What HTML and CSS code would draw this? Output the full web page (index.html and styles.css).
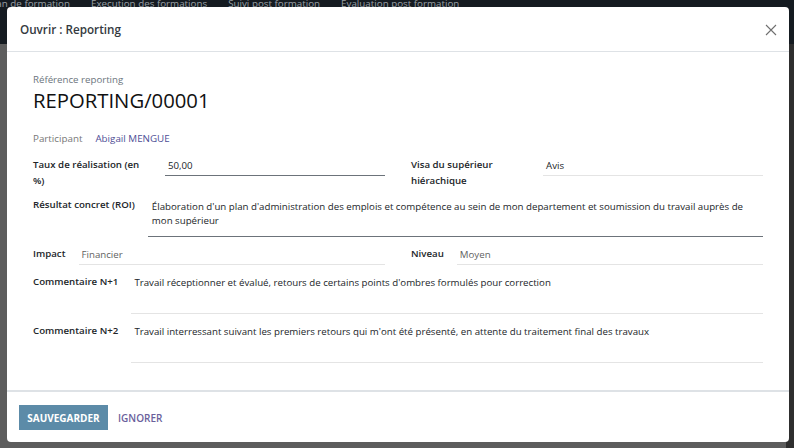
FILE: index.html
```html
<!DOCTYPE html>
<html lang="fr">
  <head>
    <title>Ouvrir : Reporting</title>
    <meta name="viewport" content="width=device-width, initial-scale=1.0">
    <link rel="stylesheet" href="styles.css">
  </head>
  <body>
    <div class="navbar">
      <span class="nav-first">Plan de formation</span>
      <span>Execution des formations</span>
      <span>Suivi post formation</span>
      <span>Evaluation post formation</span>
    </div>
    <div class="page">
      <div class="page-main"></div>
      <div class="page-side"></div>
    </div>

    <div class="modal">
      <div class="modal-header">
        <h4 class="modal-title">Ouvrir : Reporting</h4>
        <svg class="close" width="12" height="12" viewBox="0 0 12 12">
          <path d="M1 1 L11 11 M11 1 L1 11" stroke="#6f6f6f" stroke-width="1.1" fill="none"/>
        </svg>
      </div>

      <div class="modal-body">
        <div class="ref-label">Référence reporting</div>
        <h1 class="ref-name">REPORTING/00001</h1>

        <div class="participant">
          <span class="muted-label">Participant</span>
          <a class="link">Abigail MENGUE</a>
        </div>

        <div class="cols">
          <div class="field-row">
            <label class="lbl lbl-wrap">Taux de réalisation (en %)</label>
            <div class="val val-dark">50,00</div>
          </div>
          <div class="field-row">
            <label class="lbl lbl-wrap">Visa du supérieur hiérachique</label>
            <div class="val">Avis</div>
          </div>
        </div>

        <div class="field-row row-roi">
          <label class="lbl">Résultat concret (ROI)</label>
          <div class="val val-dark val-area-roi">Élaboration d'un plan d'administration des emplois et compétence au sein de mon departement et soumission du travail auprès de mon supérieur</div>
        </div>

        <div class="cols row-gap">
          <div class="field-row">
            <label class="lbl">Impact</label>
            <div class="val val-select">Financier</div>
          </div>
          <div class="field-row">
            <label class="lbl">Niveau</label>
            <div class="val val-select">Moyen</div>
          </div>
        </div>

        <div class="field-row row-gap">
          <label class="lbl">Commentaire N+1</label>
          <div class="val val-area">Travail réceptionner et évalué, retours de certains points d'ombres formulés pour correction</div>
        </div>

        <div class="field-row row-gap">
          <label class="lbl">Commentaire N+2</label>
          <div class="val val-area">Travail interressant suivant les premiers retours qui m'ont été présenté, en attente du traitement final des travaux</div>
        </div>
      </div>

      <div class="modal-footer">
        <button class="btn-primary">SAUVEGARDER</button>
        <button class="btn-link">IGNORER</button>
      </div>
    </div>
  </body>
</html>
```

FILE: styles.css
```css
html, body {
  margin: 0;
  height: 100%;
}
body {
  background-color: #4b4b4b;
  font-family: "Open Sans", "Noto Sans", sans-serif;
  color: #212529;
  overflow: hidden;
}

/* page behind the dialog */
.navbar {
  height: 46px;
  background-color: #151b21;
  display: flex;
  gap: 21px;
  color: #9aa0a6;
  font-size: 9.8px;
  line-height: 12px;
  margin-top: -2px;
  white-space: nowrap;
}
.nav-first {
  margin-left: -12px;
}
.page {
  height: 410px;
  display: flex;
}
.page-main {
  flex: 1;
  background-color: #5d5d5d;
}
.page-side {
  width: 8px;
  background-color: #2e2e2e;
}

/* dialog */
.modal {
  position: absolute;
  left: 7px;
  top: 7px;
  width: 782px;
  height: 435px;
  background-color: #fff;
  border-radius: 4px;
  display: flex;
  flex-direction: column;
}
.modal-header {
  height: 44px;
  border-bottom: 1px solid #dee2e6;
  display: flex;
  align-items: center;
  justify-content: space-between;
  padding: 0 12px 0 13px;
  flex: none;
}
.modal-title {
  margin: 0;
  font-size: 11.7px;
  font-weight: 600;
  color: #343a40;
}
.close {
  margin-top: 1px;
}

.modal-body {
  flex: 1;
  padding: 20px 26px 0;
}
.ref-label {
  font-size: 9.7px;
  line-height: 15px;
  color: #6c757d;
}
.ref-name {
  margin: 0;
  font-size: 20.3px;
  line-height: 26px;
  font-weight: 400;
  color: #111;
}
.participant {
  margin-top: 18px;
  display: flex;
  gap: 13px;
  font-size: 9.8px;
  line-height: 16px;
}
.muted-label {
  color: #777;
}
.link {
  color: #4e4e96;
}

.cols {
  margin-top: 10px;
  display: grid;
  grid-template-columns: 352px 352px;
  gap: 26px;
}
.field-row {
  display: flex;
  align-items: flex-start;
  font-size: 9.7px;
}
.lbl {
  flex: none;
  font-size: 9.7px;
  font-weight: 600;
  line-height: 16px;
  padding-right: 13px;
  color: #212529;
}
.lbl-wrap {
  width: 132px;
  box-sizing: border-box;
  padding-right: 20px;
}
.val {
  flex: 1;
  line-height: 14px;
  padding: 1px 3px 2px;
  margin-top: 1px;
  border-bottom: 1px solid #e4e4e4;
  color: #212529;
}
.val-dark {
  border-bottom-color: #6c737a;
}
.val-select {
  color: #5f5f5f;
}
.row-roi {
  margin-top: 8px;
}
.val-area-roi {
  padding: 2px 3px 8px 4px;
}
.row-gap {
  margin-top: 9px;
}
.val-area {
  padding-bottom: 23px;
}

.modal-footer {
  flex: none;
  height: 50px;
  border-top: 2px solid #dee2e6;
  display: flex;
  align-items: center;
  gap: 10px;
  padding: 0 12px;
}
.btn-primary {
  background-color: #5c8ba8;
  color: #fff;
  border: none;
  font-family: inherit;
  font-size: 10px;
  font-weight: 700;
  height: 25px;
  width: 89px;
  padding: 0;
  margin-top: 1px;
}
.btn-link {
  background: none;
  border: none;
  color: #6a5f9c;
  font-family: inherit;
  font-size: 10px;
  font-weight: 600;
  padding: 0;
  margin-top: 1px;
}
```
